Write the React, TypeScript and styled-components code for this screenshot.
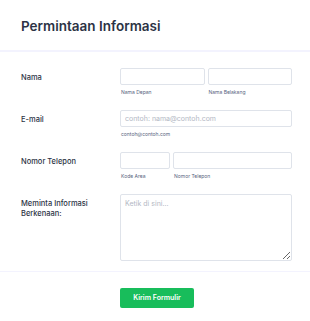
import styled, { createGlobalStyle } from "styled-components";

const GlobalStyle = createGlobalStyle`
  html, body {
    margin: 0;
    padding: 0;
    background: #ffffff;
  }
  body {
    font-family: Inter, "Noto Sans", sans-serif;
    color: #2c3345;
  }
  * {
    box-sizing: border-box;
  }
`;

const Card = styled.div`
  width: 310px;
  height: 321px;
  background: #ffffff;
  overflow: hidden;
`;

const Header = styled.div`
  height: 52px;
  padding: 17px 21px 0;
  border-bottom: 2px solid #f3f3fe;
`;

const Title = styled.h1`
  margin: 0;
  font-size: 13.5px;
  line-height: 18px;
  font-weight: 600;
  color: #2c3345;
`;

const Fields = styled.div`
  padding: 16px 18px 0 21px;
  display: flex;
  flex-direction: column;
`;

const Row = styled.div<{ $gap?: number }>`
  display: grid;
  grid-template-columns: 99px 1fr;
  margin-bottom: ${(p) => p.$gap ?? 15}px;
`;

const Label = styled.label`
  padding-top: 5px;
  font-size: 7.5px;
  line-height: 10px;
  font-weight: 500;
  color: #2c3345;
`;

const Group = styled.div<{ $cols: string }>`
  display: grid;
  grid-template-columns: ${(p) => p.$cols};
  column-gap: 3px;
`;

const Cell = styled.div`
  display: flex;
  flex-direction: column;
  gap: 4px;
`;

const Input = styled.input`
  width: 100%;
  height: 17px;
  margin: 0;
  padding: 0 4px;
  border: 1px solid #dfe3ea;
  border-radius: 2px;
  background: #ffffff;
  font-family: Inter, "Noto Sans", sans-serif;
  font-size: 7px;
  color: #2c3345;
  outline: none;

  &::placeholder {
    color: #b3b8c4;
  }
`;

const TextArea = styled.textarea`
  display: block;
  width: 100%;
  height: 67px;
  margin: 0;
  padding: 4px 4px;
  border: 1px solid #dfe3ea;
  border-radius: 2px;
  background: #ffffff;
  font-family: Inter, "Noto Sans", sans-serif;
  font-size: 7px;
  line-height: 9px;
  color: #2c3345;
  outline: none;
  resize: vertical;

  &::placeholder {
    color: #b3b8c4;
  }
`;

const SubLabel = styled.span`
  font-size: 5px;
  line-height: 6px;
  color: #57647e;
  padding-left: 1px;
`;

const Footer = styled.div`
  border-top: 1px solid #f3f3fe;
  padding: 12px 0 0 120px;
`;

const SubmitButton = styled.button`
  width: 74px;
  height: 20px;
  border: none;
  border-radius: 2px;
  background: #18bd5b;
  color: #ffffff;
  font-family: Inter, "Noto Sans", sans-serif;
  font-size: 7px;
  font-weight: 600;
  cursor: pointer;
`;

export default function App() {
  return (
    <>
      <GlobalStyle />
      <Card>
        <Header>
          <Title>Permintaan Informasi</Title>
        </Header>
        <Fields>
          <Row>
            <Label>Nama</Label>
            <Group $cols="1fr 1fr">
              <Cell>
                <Input />
                <SubLabel>Nama Depan</SubLabel>
              </Cell>
              <Cell>
                <Input />
                <SubLabel>Nama Belakang</SubLabel>
              </Cell>
            </Group>
          </Row>
          <Row>
            <Label>E-mail</Label>
            <Cell>
              <Input placeholder="contoh: nama@contoh.com" />
              <SubLabel>contoh@contoh.com</SubLabel>
            </Cell>
          </Row>
          <Row>
            <Label>Nomor Telepon</Label>
            <Group $cols="50px 1fr">
              <Cell>
                <Input />
                <SubLabel>Kode Area</SubLabel>
              </Cell>
              <Cell>
                <Input />
                <SubLabel>Nomor Telepon</SubLabel>
              </Cell>
            </Group>
          </Row>
          <Row $gap={10}>
            <Label>
              Meminta Informasi
              <br />
              Berkenaan:
            </Label>
            <TextArea placeholder="Ketik di sini..." />
          </Row>
        </Fields>
        <Footer>
          <SubmitButton>Kirim Formulir</SubmitButton>
        </Footer>
      </Card>
    </>
  );
}
